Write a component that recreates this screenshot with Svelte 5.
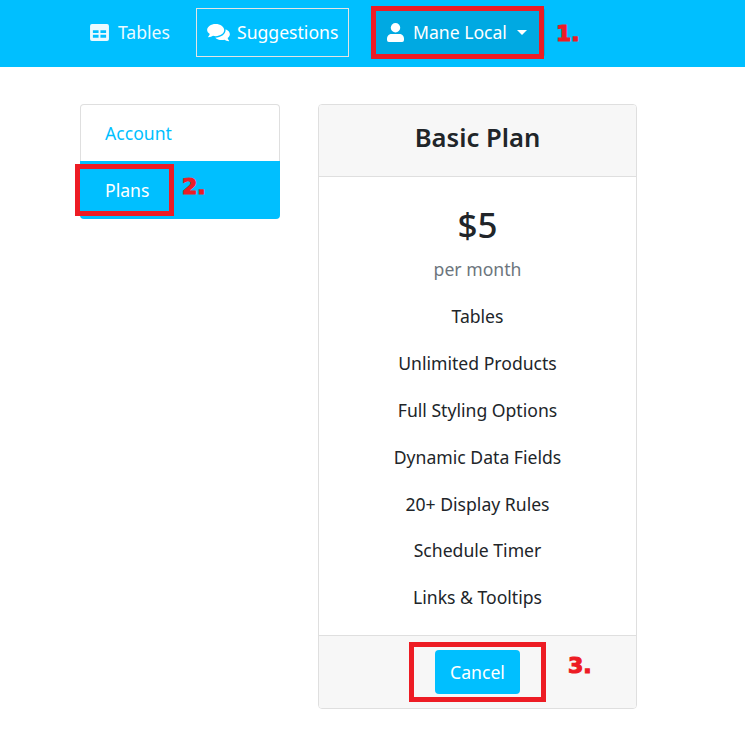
<script>
  const features = [
    'Tables',
    'Unlimited Products',
    'Full Styling Options',
    'Dynamic Data Fields',
    '20+ Display Rules',
    'Schedule Timer',
    'Links & Tooltips'
  ];
</script>

<nav class="navbar">
  <a class="nav-link tables" href="#tables">
    <svg class="icon" viewBox="0 0 20 18" width="19" height="17">
      <path fill="currentColor" fill-rule="evenodd" d="M2 0h16a2 2 0 0 1 2 2v14a2 2 0 0 1-2 2H2a2 2 0 0 1-2-2V2a2 2 0 0 1 2-2zM3 6.500v3h6v-3zM11 6.500v3h6v-3zM3 11.500v3h6v-3zM11 11.500v3h6v-3z" />
    </svg>
    <span class="label">Tables</span>
  </a>
  <a class="nav-link suggestions" href="#suggestions">
    <svg class="icon" viewBox="0 0 24 19" width="23" height="18">
      <path fill="currentColor" d="M9 0c5 0 9 2.800 9 6.400s-4 6.400-9 6.400c-1 0-1.900-.1-2.800-.3C5 13.400 3.300 14 1.300 14c-.3 0-.4-.3-.2-.5.700-.8 1.400-1.800 1.700-2.900C1 9.400 0 8 0 6.400 0 2.800 4 0 9 0z" />
      <path fill="currentColor" d="M19.500 5.500c2.700 1 4.500 3 4.500 5.300 0 1.600-.9 3-2.400 4.100.3 1 .9 2 1.600 2.800.2.200.1.500-.2.500-1.900 0-3.500-.7-4.700-1.500-.9.200-1.800.3-2.800.3-2.800 0-5.300-1-6.900-2.500 5.800-.1 10.900-3.600 10.900-8.100 0-.1 0-.3 0-.4z" />
    </svg>
    <span class="label">Suggestions</span>
  </a>
  <div class="user-wrap">
    <a class="nav-link user" href="#user">
      <svg class="icon" viewBox="0 0 18 20" width="17" height="19">
        <circle fill="currentColor" cx="9" cy="5" r="5" />
        <path fill="currentColor" d="M5 11.500h8c2.800 0 5 2.200 5 5V18a2 2 0 0 1-2 2H2a2 2 0 0 1-2-2v-1.500c0-2.800 2.200-5 5-5z" />
      </svg>
      <span class="label">Mane Local</span>
      <span class="caret"></span>
    </a>
    <span class="mark mark-user"></span>
    <span class="step step-1">1.</span>
  </div>
</nav>

<main class="content">
  <aside class="list-group">
    <a class="list-item" href="#account">Account</a>
    <a class="list-item active" href="#plans">
      Plans
      <span class="mark mark-plans"></span>
      <span class="step step-2">2.</span>
    </a>
  </aside>

  <section class="card">
    <header class="card-header">
      <h2>Basic Plan</h2>
    </header>
    <div class="card-body">
      <div class="price">$5</div>
      <div class="period">per month</div>
      <ul>
        {#each features as feature}
          <li>{feature}</li>
        {/each}
      </ul>
    </div>
    <footer class="card-footer">
      <div class="cancel-wrap">
        <button type="button">Cancel</button>
        <span class="mark mark-cancel"></span>
        <span class="step step-3">3.</span>
      </div>
    </footer>
  </section>
</main>

<style>
  :global(body) {
    margin: 0;
    background: #fff;
    font-family: "Noto Sans", "Open Sans", sans-serif;
    color: #212529;
  }

  a {
    text-decoration: none;
  }

  .navbar {
    display: flex;
    align-items: center;
    box-sizing: border-box;
    height: 67px;
    padding: 0 0 2px 80px;
    background: #00bfff;
    font-size: 17.6px;
  }

  .nav-link {
    display: flex;
    align-items: center;
    gap: 9px;
    color: #fff;
    white-space: nowrap;
  }

  .label {
    padding-bottom: 1px;
  }

  .icon {
    display: block;
    flex: none;
  }

  .tables {
    padding: 0 10px;
    margin-right: 16px;
    opacity: 0.92;
  }

  .suggestions {
    box-sizing: border-box;
    height: 49px;
    width: 153px;
    padding-left: 10px;
    margin-right: 23px;
    gap: 7px;
    border: 1px solid #e4e4e4;
  }

  .user-wrap {
    position: relative;
  }

  .user {
    box-sizing: border-box;
    width: 173px;
    height: 49px;
    padding-left: 15px;
    background: #00a9e2;
    border-radius: 3px;
  }

  .caret {
    width: 0;
    height: 0;
    margin-left: 1px;
    border-top: 5px solid #fff;
    border-left: 5px solid transparent;
    border-right: 5px solid transparent;
  }

  .mark {
    position: absolute;
    box-sizing: border-box;
    border: 5px solid #ed1c24;
    pointer-events: none;
  }

  .step {
    position: absolute;
    color: #ed1c24;
    font-family: "DejaVu Sans", sans-serif;
    font-weight: 700;
    font-size: 22px;
    line-height: 1;
    -webkit-text-stroke: 1.2px #ed1c24;
  }

  .mark-user {
    left: -1px;
    top: -2px;
    width: 173px;
    height: 53px;
  }

  .step-1 {
    left: 184px;
    top: 15px;
  }

  .content {
    display: flex;
    align-items: flex-start;
    gap: 38px;
    padding: 37px 0 0 80px;
  }

  .list-group {
    width: 200px;
    flex: none;
  }

  .list-item {
    display: flex;
    align-items: center;
    box-sizing: border-box;
    height: 57px;
    padding-left: 24px;
    font-size: 17.6px;
    color: #00bfff;
    background: #fff;
    border: 1px solid #dfdfdf;
    border-bottom: none;
    border-radius: 4px 4px 0 0;
  }

  .list-item.active {
    position: relative;
    height: 58px;
    padding-left: 25px;
    color: #fff;
    background: #00bfff;
    border: none;
    border-radius: 0 0 4px 4px;
  }

  .mark-plans {
    left: -5px;
    top: 3px;
    width: 99px;
    height: 52px;
  }

  .step-2 {
    left: 102px;
    top: 15px;
  }

  .card {
    box-sizing: border-box;
    width: 319px;
    border: 1px solid #dfdfdf;
    border-radius: 4px;
    overflow: hidden;
    text-align: center;
  }

  .card-header {
    box-sizing: border-box;
    height: 72px;
    padding-bottom: 6px;
    display: flex;
    align-items: center;
    justify-content: center;
    background: #f7f7f7;
    border-bottom: 1px solid #dfdfdf;
  }

  h2 {
    margin: 0;
    font-size: 25.6px;
    font-weight: 600;
    color: #212529;
  }

  .card-body {
    padding-top: 23px;
    height: 458px;
    box-sizing: border-box;
  }

  .price {
    font-size: 35px;
    font-weight: 500;
    line-height: 50px;
  }

  .period {
    font-size: 17.6px;
    line-height: 28px;
    color: #6c757d;
    margin-top: 5px;
  }

  ul {
    list-style: none;
    margin: 10.400px 0 0;
    padding: 0;
  }

  li {
    font-size: 17.6px;
    height: 46.800px;
    line-height: 46.800px;
  }

  .card-footer {
    display: flex;
    justify-content: center;
    height: 73px;
    padding-top: 14px;
    box-sizing: border-box;
    background: #f7f7f7;
    border-top: 1px solid #dfdfdf;
  }

  .cancel-wrap {
    position: relative;
  }

  button {
    display: block;
    width: 85px;
    height: 44px;
    padding: 0;
    border: none;
    border-radius: 4px;
    background: #00bfff;
    color: #fff;
    font: inherit;
    font-size: 17.6px;
  }

  .mark-cancel {
    left: -26px;
    top: -8px;
    width: 137px;
    height: 60px;
  }

  .step-3 {
    left: 133px;
    top: 5px;
  }
</style>
